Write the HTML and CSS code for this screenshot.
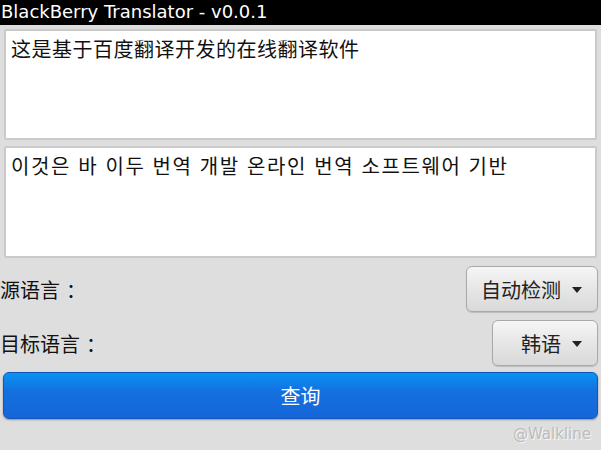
FILE: index.html
```html
<!DOCTYPE html>
<html lang="zh">
<head>
<meta charset="utf-8">
<title>BlackBerry Translator</title>
<link rel="stylesheet" href="styles.css">
</head>
<body>
<div class="titlebar">BlackBerry Translator - v0.0.1</div>
<main class="content">
  <div class="field">这是基于百度翻译开发的在线翻译软件</div>
  <div class="field ko" lang="ko">이것은 바 이두 번역 개발 온라인 번역 소프트웨어 기반</div>
  <div class="row">
    <span class="label">源语言<span class="colon">：</span></span>
    <button class="drop drop-wide">自动检测<svg class="caret" width="10" height="6" viewBox="0 0 10 6"><path d="M0 0H10L5 6Z" fill="#222"/></svg></button>
  </div>
  <div class="row">
    <span class="label">目标语言<span class="colon">：</span></span>
    <button class="drop drop-narrow">韩语<svg class="caret" width="10" height="6" viewBox="0 0 10 6"><path d="M0 0H10L5 6Z" fill="#222"/></svg></button>
  </div>
  <button class="query">查询</button>
  <div class="mark">@Walkline</div>
</main>
</body>
</html>
```
FILE: styles.css
```css
* { box-sizing: border-box; }
html, body { margin: 0; padding: 0; }
body {
  width: 601px;
  height: 450px;
  background: #dedede;
  font-family: "DejaVu Sans", "Noto Sans CJK SC", sans-serif;
  color: #111;
  overflow: hidden;
}
.titlebar {
  height: 25px;
  background: #000;
  color: #fff;
  font-size: 18px;
  line-height: 24px;
  padding-left: 1px;
  white-space: nowrap;
}
.content {
  display: flex;
  flex-direction: column;
  padding: 4px 4px 0 4px;
}
.field {
  height: 111px;
  background: #fff;
  border: 2px solid #cacaca;
  border-radius: 2px;
  padding: 4px 5px;
  font-size: 20px;
  line-height: 28px;
  letter-spacing: 0.5px;
  font-family: "Noto Sans CJK SC", sans-serif;
  color: #111;
}
.field.ko {
  margin-top: 6px;
  height: 112px;
  letter-spacing: 1.6px;
  font-family: "Noto Sans CJK KR", sans-serif;
}
.row {
  display: flex;
  align-items: center;
  justify-content: space-between;
  height: 46px;
  margin-left: -4px;
  margin-top: 8px;
}
.label {
  font-family: "Noto Sans CJK SC", sans-serif;
  font-size: 20px;
  color: #111;
}
.colon {
  margin-left: 6px;
}
.drop {
  height: 46px;
  display: flex;
  align-items: center;
  justify-content: flex-end;
  gap: 11px;
  padding: 0 15px 0 0;
  border: 1px solid #a9a9a9;
  border-radius: 6px;
  background: linear-gradient(#f6f6f6, #e6e6e6 50%, #d9d9d9);
  box-shadow: 0 1px 1px rgba(0,0,0,0.15);
  font-family: "Noto Sans CJK SC", sans-serif;
  font-size: 20px;
  color: #222;
  margin-right: -1px;
}
.drop-wide { width: 132px; }
.drop-narrow { width: 106px; }
.caret { display: block; margin-top: 1px; }
.query {
  margin-top: 6px;
  margin-left: -1px;
  margin-right: -1px;
  height: 47px;
  border: 1px solid #0d57bd;
  border-radius: 6px;
  background: linear-gradient(#0b93f2, #1470e0 40%, #1666d8);
  box-shadow: 0 1px 2px rgba(0,0,0,0.35);
  color: #fff;
  font-family: "Noto Sans CJK SC", sans-serif;
  font-size: 20px;
}
.mark {
  align-self: flex-end;
  margin-top: 6px;
  margin-right: 6px;
  font-family: "DejaVu Sans", sans-serif;
  font-size: 15px;
  color: #bcbcbc;
  text-shadow: 1px 1px 0 #f6f6f6;
}
```
